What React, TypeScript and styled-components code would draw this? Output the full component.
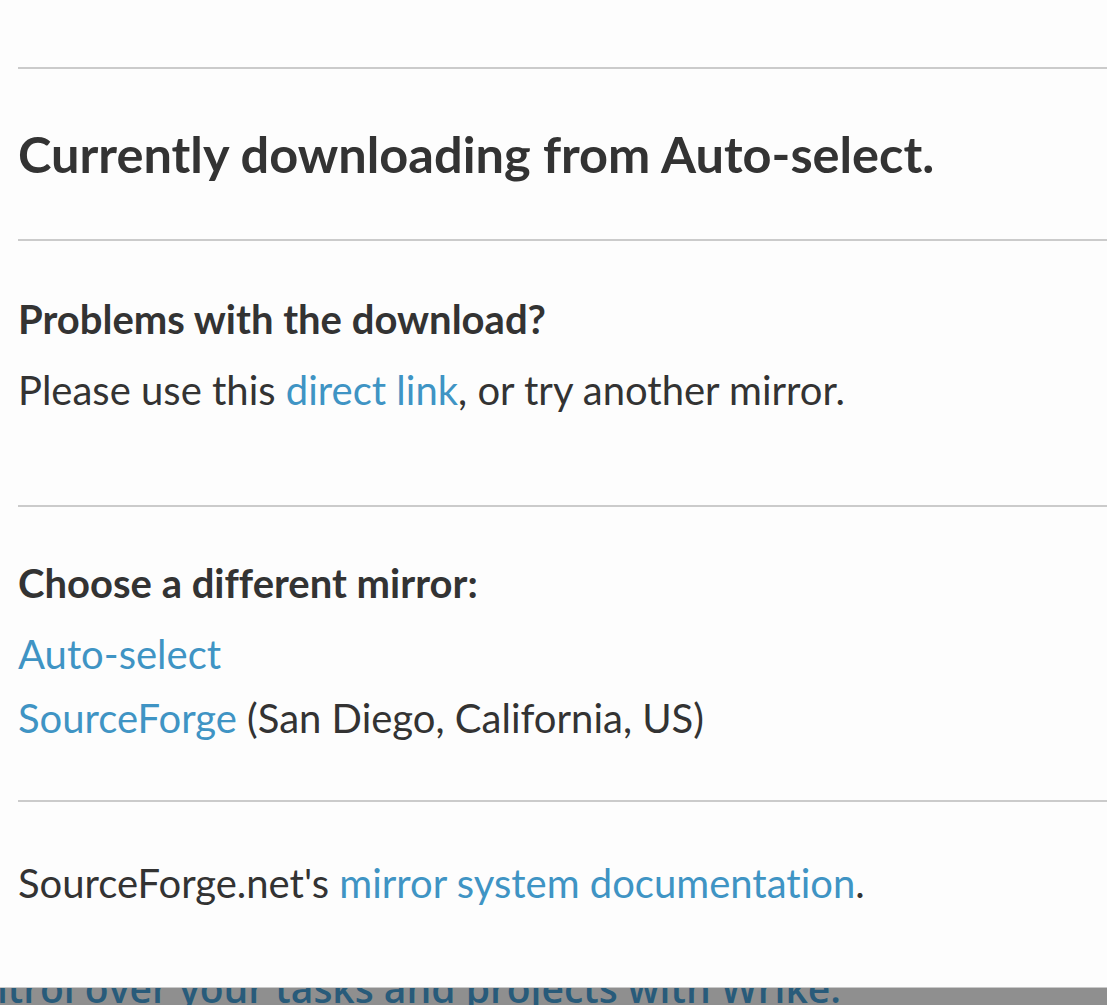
import React from 'react';
import styled, { createGlobalStyle } from 'styled-components';

const GlobalStyle = createGlobalStyle`
    html, body {
        margin: 0;
        padding: 0;
        background: #fdfdfd;
    }
    body {
        font-family: Lato, "Liberation Sans", sans-serif;
        font-variant-ligatures: none;
        color: #333;
        overflow: hidden;
    }
`

const Page = styled.main`
    padding: 67px 0 0 18px;
`

const Rule = styled.hr`
    margin: 0;
    border: 0;
    height: 2px;
    background: #cbcbcb;
`

const Section = styled.section<{ $top: number; $bottom: number }>`
    padding-top: ${p => p.$top}px;
    padding-bottom: ${p => p.$bottom}px;
`

const Title = styled.h1`
    margin: 0;
    font-size: 50.5px;
    line-height: 61px;
    font-weight: 700;
    color: #333;
`

const Heading = styled.h2`
    margin: 0 0 15px;
    font-size: 40px;
    line-height: 48px;
    font-weight: 700;
    color: #333;
`

const Text = styled.p`
    margin: 0;
    font-size: 40px;
    line-height: 64.5px;
    font-weight: 400;
    color: #333;
`

const Link = styled.a`
    color: #3f94c4;
    text-decoration: none;
`

// sticky promo strip that overlays the bottom of the page
const AdBar = styled.div`
    position: fixed;
    left: 0;
    right: 0;
    bottom: 0;
    height: 17px;
    border-top: 1px solid #c9c9c9;
    background: #8f8f8f;
    overflow: hidden;
`

const AdText = styled.div`
    margin-left: -17px;
    font-family: "Open Sans", "Liberation Sans", sans-serif;
    font-weight: 600;
    font-size: 39px;
    line-height: 0;
    color: #285b7a;
    white-space: nowrap;
`

const App = (): JSX.Element => {
    return (
        <>
            <GlobalStyle />
            <Page>
                <Rule />
                <Section $top={54} $bottom={55}>
                    <Title>Currently downloading from Auto-select.</Title>
                </Section>
                <Rule />
                <Section $top={54} $bottom={82}>
                    <Heading>Problems with the download?</Heading>
                    <Text>Please use this <Link href="#">direct link</Link>, or try another mirror.</Text>
                </Section>
                <Rule />
                <Section $top={52} $bottom={49}>
                    <Heading>Choose a different mirror:</Heading>
                    <Text><Link href="#">Auto-select</Link></Text>
                    <Text><Link href="#">SourceForge</Link> (San Diego, California, US)</Text>
                </Section>
                <Rule />
                <Section $top={49} $bottom={40}>
                    <Text>SourceForge.net's <Link href="#">mirror system documentation</Link>.</Text>
                </Section>
            </Page>
            <AdBar>
                <AdText>ntrol over your tasks and projects with Wrike.</AdText>
            </AdBar>
        </>
    )
}

export default App
